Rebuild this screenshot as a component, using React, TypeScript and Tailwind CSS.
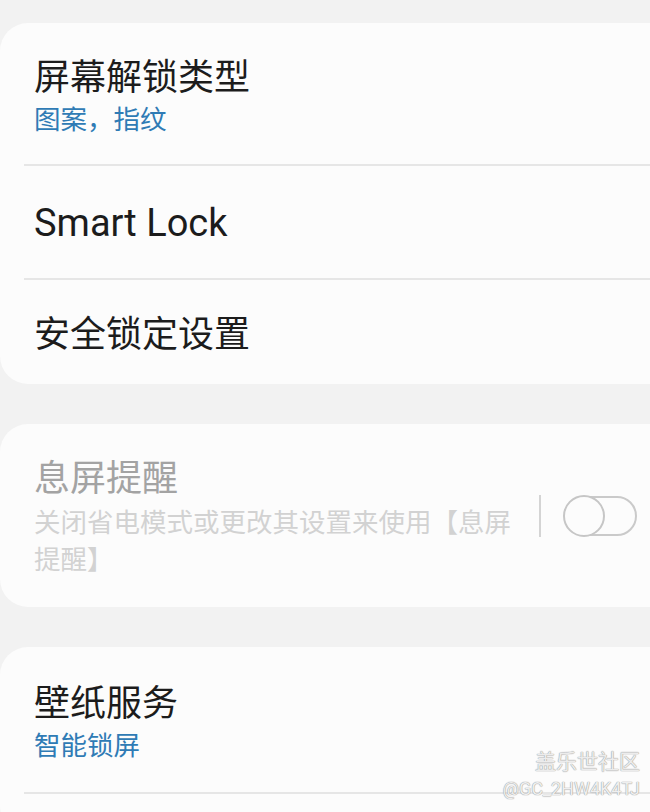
import React from 'react'

function Divider() {
  return <div className="ml-[24px] h-[2px] bg-[#e6e6e6]" />
}

function Row({ title, sub, height, titleClass }: { title: string; sub?: string; height: string; titleClass?: string }) {
  return (
    <div className={`flex flex-col justify-center pl-[34px] ${height}`}>
      <div className={`text-[36px] leading-[44px] text-[#1c1c1c] ${titleClass ?? ''}`}>{title}</div>
      {sub && <div className="mt-[3px] text-[26.5px] leading-[34px] text-[#2f7bb5]">{sub}</div>}
    </div>
  )
}

export default function App() {
  return (
    <div className="relative h-[812px] w-[650px] overflow-hidden bg-[#f2f2f2] font-['Roboto','Noto_Sans_CJK_SC',sans-serif]">
      <div className="pt-[23px]">
        {/* Lock screen group */}
        <div className="w-[700px] rounded-[28px] bg-[#fcfcfc]">
          <Row title="屏幕解锁类型" sub="图案，指纹" height="h-[141px] pt-[5px]" />
          <Divider />
          <Row title="Smart Lock" height="h-[112px] pt-[1px]" titleClass="text-[38px]" />
          <Divider />
          <Row title="安全锁定设置" height="h-[104px] pt-[5px]" />
        </div>

        {/* Always on display (disabled) */}
        <div className="mt-[40px] flex h-[183px] w-[700px] items-center rounded-[28px] bg-[#fcfcfc] pl-[34px] pt-[4px]">
          <div className="w-[492px]">
            <div className="text-[36px] leading-[44px] text-[#a3a3a3]">息屏提醒</div>
            <div className="mt-[3px] text-[26.5px] leading-[37px] text-[#d2d2d2]">关闭省电模式或更改其设置来使用【息屏提醒】</div>
          </div>
          <div className="ml-[13px] mb-[4px] h-[42px] w-[2px] bg-[#d4d4d4]" />
          <div className="relative mb-[4px] ml-[22px] h-[42px] w-[74px]">
            <div className="absolute left-[4px] top-[1px] h-[40px] w-[70px] rounded-full border-2 border-[#cacaca]" />
            <div className="absolute left-0 top-0 h-[42px] w-[42px] rounded-full border-2 border-[#c6c6c6] bg-[#fcfcfc]" />
          </div>
        </div>

        {/* Wallpaper group */}
        <div className="mt-[40px] w-[700px] rounded-[28px] bg-[#fcfcfc]">
          <Row title="壁纸服务" sub="智能锁屏" height="h-[145px] pt-[6px]" />
          <Divider />
          <div className="h-[40px]" />
        </div>
      </div>

      {/* Watermark */}
      <div className="absolute right-[10px] top-[750px] flex flex-col items-end">
        <div className="text-[21px] leading-[24px] text-[#ececec] [text-shadow:0_0_1px_#999,0_0_1px_#999]">盖乐世社区</div>
        <div className="mt-[4px] text-[18px] leading-[22px] text-[#efefef] [text-shadow:0_0_1px_#999,0_0_1px_#999]">@GC_2HW4K4TJ</div>
      </div>
    </div>
  )
}
